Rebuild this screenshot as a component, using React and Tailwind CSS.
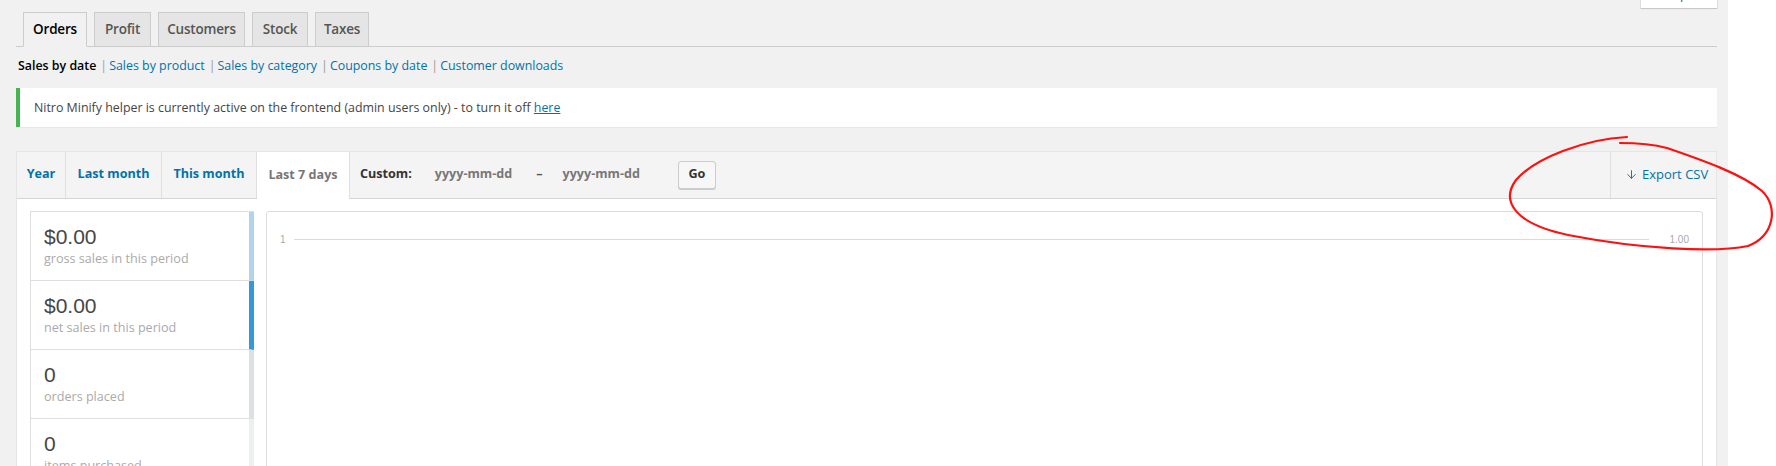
import React from 'react';
import { ArrowDown } from 'lucide-react';

const ui = { fontFamily: '"Open Sans", "Noto Sans", sans-serif' };
const num = { fontFamily: '"Liberation Sans", Arial, sans-serif' };

const ReportTabs = () => {
  const tabs = [
    { label: 'Orders', w: 'w-[64px]' },
    { label: 'Profit', w: 'w-[57px]' },
    { label: 'Customers', w: 'w-[87px]' },
    { label: 'Stock', w: 'w-[56px]' },
    { label: 'Taxes', w: 'w-[54px]' },
  ];
  return (
    <div className="flex border-b border-[#ccc] pt-[12px]">
      {tabs.map((t, i) => (
        <div
          key={t.label}
          className={
            i === 0
              ? `${t.w} ml-[7px] -mb-px h-[35px] border border-[#ccc] border-b-[#f1f1f1] bg-[#f1f1f1] text-center text-[13.5px] font-semibold leading-[33px] tracking-[-0.2px] text-black`
              : `${t.w} ml-[7px] h-[34px] border border-b-0 border-[#ccc] bg-[#e5e5e5] text-center text-[13.5px] font-semibold leading-[33px] tracking-[-0.2px] text-[#555]`
          }
        >
          {t.label}
        </div>
      ))}
    </div>
  );
};

const SubNav = () => {
  const links = ['Sales by product', 'Sales by category', 'Coupons by date', 'Customer downloads'];
  return (
    <div className="mt-[6px] flex text-[12.4px] leading-[26px] text-[#999]">
      <span className="ml-[2px] font-semibold text-black">Sales by date</span>
      {links.map((l) => (
        <span key={l} className="flex">
          <span className="pl-[4px] pr-[2px]">|</span>
          <span className="text-[#0073aa]">{l}</span>
        </span>
      ))}
    </div>
  );
};

const Notice = () => (
  <div className="mt-[9px] border-l-4 border-[#46b450] bg-white px-[12px] py-px shadow-[0_1px_1px_rgba(0,0,0,0.04)]">
    <p className="my-[6.5px] p-[2px] text-[12.4px] leading-[19.5px] text-[#444]">
      Nitro Minify helper is currently active on the frontend (admin users only) - to turn it off{' '}
      <span className="text-[#0073aa] underline">here</span>
    </p>
  </div>
);

const RangeBar = () => {
  const ranges = [
    { label: 'Year', w: 'w-[49px]' },
    { label: 'Last month', w: 'w-[96px]' },
    { label: 'This month', w: 'w-[95px]' },
  ];
  return (
    <div className="flex h-[47px] items-stretch border-b border-[#d5d5d5] bg-[#f4f4f4] text-[12.6px] font-bold">
      {ranges.map((r) => (
        <div key={r.label} className={`${r.w} flex items-center justify-center border-r border-[#dfdfdf] text-[#0073aa]`}>
          {r.label}
        </div>
      ))}
      <div className="-mb-px flex w-[93px] items-center justify-center border-r border-[#dfdfdf] bg-white text-[#777]">
        Last 7 days
      </div>
      <div className="flex items-center pl-[10px]">
        <span className="text-[#333]">Custom:</span>
        <span className="ml-[23px] text-[#777]">yyyy-mm-dd</span>
        <span className="ml-[24px] text-[#555]">–</span>
        <span className="ml-[20px] text-[#777]">yyyy-mm-dd</span>
        <span className="ml-[38px] flex h-[28px] w-[38px] items-center justify-center rounded-[3px] border border-[#ccc] bg-[#f7f7f7] text-[#333] shadow-[0_1px_0_#ccc]">
          Go
        </span>
      </div>
      <div className="ml-auto flex w-[106px] items-center gap-[4px] border-l border-[#dfdfdf] pl-[14px] text-[13px] font-normal text-[#0073aa]">
        <ArrowDown size={13} strokeWidth={1.75} />
        <span>Export CSV</span>
      </div>
    </div>
  );
};

const Legend = () => {
  const items = [
    { value: '$0.00', label: 'gross sales in this period', bar: 'border-r-[#b1d4ea]' },
    { value: '$0.00', label: 'net sales in this period', bar: 'border-r-[#3498db]' },
    { value: '0', label: 'orders placed', bar: 'border-r-[#dbe1e3]' },
    { value: '0', label: 'items purchased', bar: 'border-r-[#ecf0f1]' },
  ];
  return (
    <div className="w-[224px] shrink-0 border-t border-l border-[#dfdfdf]">
      {items.map((it, i) => (
        <div key={i} className={`h-[69px] border-b border-r-[5px] border-b-[#dfdfdf] ${it.bar} px-[13px] pt-[12px]`}>
          <div className="text-[21px] leading-[25px] text-[#464646]" style={num}>{it.value}</div>
          <div className="text-[12.6px] leading-[20px] text-[#aaa]">{it.label}</div>
        </div>
      ))}
    </div>
  );
};

const Chart = () => (
  <div className="relative ml-[12px] h-[400px] flex-1 rounded-[3px] border border-[#dcdcdc] bg-white">
    <div className="mt-[20px] flex items-center px-[13px] text-[10px] text-[#aaa]" style={num}>
      <span className="w-[14px]">1</span>
      <div className="h-px flex-1 bg-[#d6dcde]" />
      <span className="ml-[11px] w-[29px] text-right">1.00</span>
    </div>
  </div>
);

const Annotation = () => (
  <svg className="pointer-events-none absolute left-0 top-0" width="1776" height="466" viewBox="0 0 1776 466">
    <path
      d="M1627 137 C1585 139 1535 158 1516 180 C1500 202 1516 224 1568 235 C1640 249 1715 253 1748 246 C1774 236 1779 207 1762 191 C1742 174 1702 160 1667 148 C1652 144 1636 143 1620 143"
      fill="none"
      stroke="#ff1010"
      strokeWidth="2.2"
      strokeLinecap="round"
    />
  </svg>
);

export default function App() {
  return (
    <div className="relative flex h-[466px] w-[1776px] overflow-hidden bg-white" style={ui}>
      <div className="relative w-[1728px] shrink-0 bg-[#f1f1f1] pl-[16px] pr-[11px]">
        <div className="absolute right-[11px] top-[-22px] flex h-[30px] w-[76px] items-end justify-center bg-white pb-[4px] text-[13px] text-[#555] shadow-[0_0_0_1px_rgba(0,0,0,0.07),0_1px_1px_rgba(0,0,0,0.1)]">
          Help ▾
        </div>
        <ReportTabs />
        <SubNav />
        <Notice />
        <div className="mt-[24px] border border-[#e5e5e5] bg-white">
          <RangeBar />
          <div className="flex pl-[13px] pr-[13px] pt-[12px]">
            <Legend />
            <Chart />
          </div>
        </div>
      </div>
      <Annotation />
    </div>
  );
}
